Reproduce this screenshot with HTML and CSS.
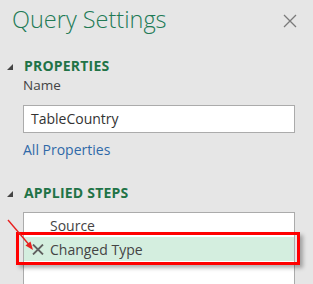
FILE: index.html
```html
<!DOCTYPE html>
<html>
<head>
<meta charset="utf-8">
<link rel="stylesheet" href="styles.css">
</head>
<body>
<div class="pane">
  <div class="header">
    <div class="title">Query Settings</div>
    <svg class="close" width="14" height="14" viewBox="0 0 14 14"><path d="M1 1 L13 13 M13 1 L1 13" stroke="#7a7a7a" stroke-width="1.3" fill="none"/></svg>
  </div>
  <div class="section props-section">
    <div class="sec-head">
      <svg class="tri" width="6" height="6" viewBox="0 0 6 6"><polygon points="6,0 6,6 0,6" fill="#444"/></svg>
      <span>PROPERTIES</span>
    </div>
    <div class="sec-body">
      <div class="label">Name</div>
      <div class="input">TableCountry</div>
      <div class="link">All Properties</div>
    </div>
  </div>
  <div class="section steps-section">
    <div class="sec-head">
      <svg class="tri" width="6" height="6" viewBox="0 0 6 6"><polygon points="6,0 6,6 0,6" fill="#444"/></svg>
      <span>APPLIED STEPS</span>
    </div>
    <div class="sec-body">
      <div class="steps">
        <div class="step">Source</div>
        <div class="step selected">
          <svg class="del" width="12" height="11" viewBox="0 0 12 11"><path d="M1 0.5 L11 10.5 M11 0.5 L1 10.5" stroke="#606060" stroke-width="1.8" fill="none"/></svg>
          <span>Changed Type</span>
          <div class="highlight"></div>
        </div>
      </div>
    </div>
  </div>
  <svg class="arrow" width="30" height="34" viewBox="0 0 30 34"><line x1="1" y1="1" x2="24" y2="28" stroke="#e8201f" stroke-width="1.4"/><polygon points="26,31 18.5,26.5 23.5,22.5" fill="#e8201f"/></svg>
</div>
</body>
</html>
```
FILE: styles.css
```css
html, body {
  margin: 0;
  padding: 0;
}
body {
  background: #e6e6e6;
  font-family: "Open Sans", "Noto Sans", sans-serif;
  width: 313px;
  height: 284px;
  overflow: hidden;
}
.pane {
  position: relative;
  height: 284px;
  overflow: hidden;
}
.header {
  display: flex;
  justify-content: space-between;
  align-items: flex-start;
  padding: 4px 16px 0 12px;
  height: 40px;
}
.title {
  font-size: 23.5px;
  line-height: 30px;
  font-weight: 300;
  color: #217a55;
}
.close {
  margin-top: 10px;
}
.sec-head {
  display: flex;
  align-items: center;
  padding-left: 7px;
  height: 16px;
}
.props-section .sec-head {
  margin-top: 14px;
}
.steps-section .sec-head {
  margin-top: 25px;
}
.sec-head .tri {
  margin-right: 11px;
  margin-top: 2px;
}
.sec-head span {
  font-size: 14px;
  line-height: 16px;
  font-weight: 700;
  color: #217346;
  letter-spacing: 0.2px;
}
.sec-body {
  padding-left: 23px;
  padding-right: 18px;
}
.label {
  margin-top: 2px;
  font-size: 13.5px;
  color: #444;
  line-height: 18px;
}
.input {
  margin-top: 11px;
  height: 26px;
  border: 1px solid #ababab;
  background: #fff;
  font-size: 14px;
  color: #333;
  line-height: 26px;
  padding-left: 7px;
}
.link {
  margin-top: 7px;
  font-size: 14px;
  color: #2f69a8;
  line-height: 20px;
}
.steps {
  margin-top: 11px;
  border: 1px solid #ababab;
  border-bottom: none;
  background: #fff;
  height: 71px;
}
.step {
  position: relative;
  display: flex;
  align-items: center;
  height: 24px;
  padding-left: 26px;
  font-size: 14px;
  color: #444;
}
.step.selected {
  background: #d4eedf;
  padding-left: 8px;
}
.step .del {
  margin-right: 6px;
}
.highlight {
  position: absolute;
  left: -8px;
  top: -5px;
  right: -6px;
  bottom: -4px;
  border: 3px solid #ff0000;
  box-shadow: 3px 3px 4px rgba(0, 0, 0, 0.3);
}
.arrow {
  position: absolute;
  left: 7px;
  top: 219px;
}
```
